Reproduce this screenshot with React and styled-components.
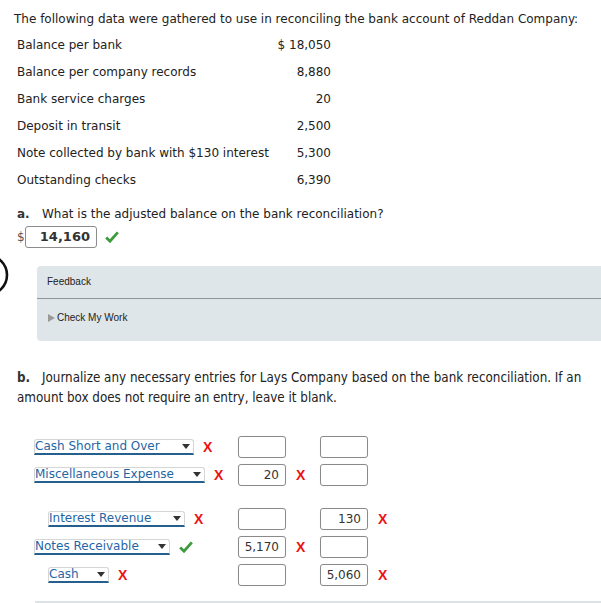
import React from 'react'
import styled, { createGlobalStyle } from 'styled-components'

const GlobalStyle = createGlobalStyle`
  body {
    margin: 0;
    background: #fff;
    font-family: "DejaVu Sans", Verdana, sans-serif;
    color: #222;
  }
`

const data = [
    ['Balance per bank', '$ 18,050'],
    ['Balance per company records', '8,880'],
    ['Bank service charges', '20'],
    ['Deposit in transit', '2,500'],
    ['Note collected by bank with $130 interest', '5,300'],
    ['Outstanding checks', '6,390'],
]

const entries = [
    [
        { account: 'Cash Short and Over', width: 160, credit: false, ok: false, debit: '', creditAmt: '' },
        { account: 'Miscellaneous Expense', width: 171, credit: false, ok: false, debit: '20', debitBad: true, creditAmt: '' },
    ],
    [
        { account: 'Interest Revenue', width: 137, credit: true, ok: false, debit: '', creditAmt: '130', creditBad: true },
        { account: 'Notes Receivable', width: 136, credit: false, ok: true, debit: '5,170', debitBad: true, creditAmt: '' },
        { account: 'Cash', width: 61, credit: true, ok: false, debit: '', creditAmt: '5,060', creditBad: true },
    ],
]

function Check() {
    return (
        <CheckIcon viewBox="0 0 14 12" width="14" height="12">
            <path d="M1.2 6.4 L5 10.2 L12.8 1.4" fill="none" stroke="#3d9b3d" strokeWidth="2.8" />
        </CheckIcon>
    )
}

function Mark({ ok }) {
    return ok ? <Check /> : <Cross>X</Cross>
}

function App() {
    return (
        <Page>
            <GlobalStyle />
            <Ring width="10" height="40">
                <circle cx="-12.6" cy="19" r="19.6" fill="none" stroke="#111" strokeWidth="2.6" />
            </Ring>

            <Intro>The following data were gathered to use in reconciling the bank account of Reddan Company:</Intro>
            <DataTable>
                {data.map(([label, value]) => (
                    <React.Fragment key={label}>
                        <Label>{label}</Label>
                        <Value>{value}</Value>
                    </React.Fragment>
                ))}
            </DataTable>

            <Question>
                <Letter>a.</Letter>
                <span>What is the adjusted balance on the bank reconciliation?</span>
            </Question>
            <AnswerRow>
                <Dollar>$</Dollar>
                <AnswerBox>14,160</AnswerBox>
                <Check />
            </AnswerRow>

            <Feedback>
                <FeedbackHead>Feedback</FeedbackHead>
                <FeedbackBody>
                    <Triangle />
                    Check My Work
                </FeedbackBody>
            </Feedback>

            <PartB>
                <Line><Letter>b.</Letter>Journalize any necessary entries for Lays Company based on the bank reconciliation. If an</Line>
                <Line>amount box does not require an entry, leave it blank.</Line>
            </PartB>

            <Journal>
                {entries.map((group, gi) => (
                    <Group key={gi}>
                        {group.map((e) => (
                            <EntryRow key={e.account}>
                                <AccountCell credit={e.credit}>
                                    <Select w={e.width}>
                                        <span>{e.account}</span>
                                        <Arrow />
                                    </Select>
                                    <Mark ok={e.ok} />
                                </AccountCell>
                                <AmountBox>{e.debit}</AmountBox>
                                <MarkCell>{e.debitBad && <Mark />}</MarkCell>
                                <AmountBox>{e.creditAmt}</AmountBox>
                                <MarkCell>{e.creditBad && <Mark />}</MarkCell>
                            </EntryRow>
                        ))}
                    </Group>
                ))}
            </Journal>
            <BottomRule />
        </Page>
    )
}

export default App

const Page = styled.div`
    position: relative;
    width: 601px;
    height: 603px;
    overflow: hidden;
    font-size: 12px;
`

const Ring = styled.svg`
    position: absolute;
    left: 0;
    top: 256px;
`

const Intro = styled.div`
    padding: 11px 0 0 14px;
    line-height: 17px;
    font-size: 12px;
    color: #222;
    white-space: nowrap;
`

const DataTable = styled.div`
    display: grid;
    grid-template-columns: 260px 54px;
    grid-auto-rows: 27px;
    align-items: center;
    margin: 3px 0 0 17px;
    font-size: 12px;
`

const Label = styled.div`
    white-space: nowrap;
`

const Value = styled.div`
    text-align: right;
    white-space: nowrap;
`

const Question = styled.div`
    display: flex;
    margin: 12px 0 0 17px;
    line-height: 18px;
    font-size: 12px;
    color: #222;
`

const Letter = styled.b`
    display: inline-block;
    width: 25px;
    color: #333;
`

const AnswerRow = styled.div`
    display: flex;
    align-items: center;
    height: 22px;
    margin: 3px 0 0 17px;
    gap: 8px;
`

const Dollar = styled.span`
    font-size: 12px;
    color: #555;
    margin-right: -8px;
    width: 8px;
`

const AnswerBox = styled.div`
    box-sizing: border-box;
    width: 72px;
    height: 22px;
    border: 1px solid #8c8c8c;
    border-radius: 3px;
    text-align: right;
    padding-right: 6px;
    line-height: 20px;
    font-size: 13px;
    font-weight: bold;
    color: #333;
`

const CheckIcon = styled.svg`
    display: block;
    flex-shrink: 0;
`

const Cross = styled.span`
    font-family: "Liberation Sans", Arial, sans-serif;
    font-weight: bold;
    font-size: 14px;
    line-height: 14px;
    color: #ee1111;
`

const Feedback = styled.div`
    margin: 18px 0 0 37px;
    width: 600px;
    height: 75px;
    background: #dfe6e9;
    border-radius: 4px 0 0 4px;
    font-family: "Liberation Sans", Arial, sans-serif;
    font-size: 10px;
    color: #222;
`

const FeedbackHead = styled.div`
    height: 32px;
    line-height: 32px;
    padding-left: 10px;
    border-bottom: 1px solid #8f979a;
`

const FeedbackBody = styled.div`
    display: flex;
    align-items: center;
    padding: 12px 0 0 11px;
    line-height: 14px;
`

const Triangle = styled.span`
    width: 0;
    height: 0;
    border-top: 4px solid transparent;
    border-bottom: 4px solid transparent;
    border-left: 7px solid #9a9a9a;
    margin-right: 2px;
`

const PartB = styled.div`
    margin: 27px 0 0 17px;
    font-family: "DejaVu Sans Condensed", Tahoma, sans-serif;
    font-size: 13.3px;
    line-height: 20px;
    color: #222;
`

const Line = styled.div`
    white-space: nowrap;
`

const Journal = styled.div`
    display: flex;
    flex-direction: column;
    gap: 16px;
    margin: 25px 0 0 34px;
`

const Group = styled.div`
    display: flex;
    flex-direction: column;
`

const EntryRow = styled.div`
    display: grid;
    grid-template-columns: 204px 48px 34px 48px 30px;
    height: 28px;
    align-items: center;
`

const AccountCell = styled.div`
    display: flex;
    align-items: center;
    gap: 9px;
    padding-left: ${(p) => (p.credit ? '14px' : '0')};
`

const Select = styled.div`
    box-sizing: border-box;
    display: flex;
    align-items: center;
    justify-content: space-between;
    width: ${(p) => p.w}px;
    height: 16px;
    border: 1px solid #d6d6d6;
    border-bottom: 2px solid #245f8d;
    border-radius: 3px 3px 0 0;
    padding: 0 3px 0 0;
    color: #1f66a6;
    font-size: 12px;
    line-height: 13px;
    white-space: nowrap;
    overflow: hidden;
`

const Arrow = styled.span`
    width: 0;
    height: 0;
    border-left: 4px solid transparent;
    border-right: 4px solid transparent;
    border-top: 5px solid #333;
`

const AmountBox = styled.div`
    box-sizing: border-box;
    width: 48px;
    height: 22px;
    border: 1px solid #8a8a8a;
    border-radius: 3px;
    box-shadow: 0 0 1px rgba(0, 0, 0, 0.15);
    text-align: right;
    padding-right: 6px;
    line-height: 20px;
    font-size: 12px;
    color: #333;
`

const MarkCell = styled.div`
    padding-left: 10px;
`

const BottomRule = styled.div`
    margin: 12px 0 0 35px;
    height: 2px;
    background: #dde3e4;
`
